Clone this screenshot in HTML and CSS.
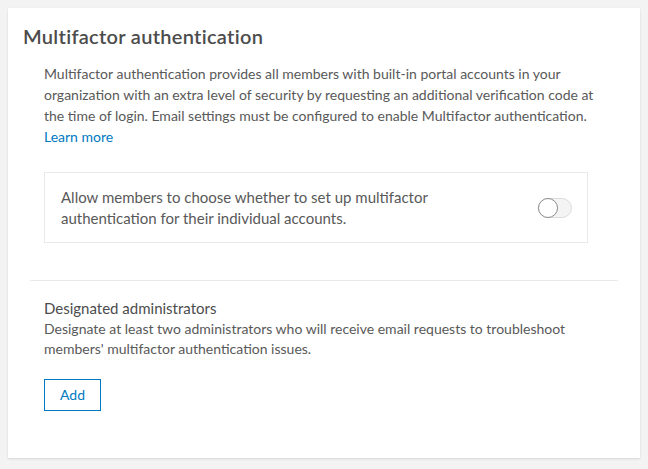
FILE: index.html
```html
<!DOCTYPE html>
<html lang="en">

<head>
    <meta charset="UTF-8">
    <meta name="viewport" content="width=device-width, initial-scale=1.0">
    <title>Multifactor authentication</title>
    <link rel="stylesheet" href="styles.css">
</head>

<body>
    <div class="card">
        <h2 class="card-title">Multifactor authentication</h2>
        <div class="section">
            <p class="intro">Multifactor authentication provides all members with built-in portal accounts in your organization with an extra level of security by requesting an additional verification code at the time of login. Email settings must be configured to enable Multifactor authentication.
                <br><a href="javascript:;" class="learn-more">Learn more</a></p>
            <div class="option-box">
                <span class="option-text">Allow members to choose whether to set up multifactor authentication for their individual accounts.</span>
                <span class="toggle"><span class="toggle-knob"></span></span>
            </div>
        </div>
        <!-- 分割线 -->
        <div class="divider"></div>
        <div class="section">
            <h3 class="sub-title">Designated administrators</h3>
            <p class="sub-desc">Designate at least two administrators who will receive email requests to troubleshoot members' multifactor authentication issues.</p>
            <a href="javascript:;" class="btn-add">Add</a>
        </div>
    </div>
</body>

</html>
```

FILE: styles.css
```css
/* 初始化样式 */

h2,
h3,
p,
div,
span,
a {
    padding: 0px;
    margin: 0px;
}

body {
    margin: 0px;
    padding: 8px;
    background: #f3f3f3;
    font-family: Lato, "Open Sans", sans-serif;
    color: #595959;
}

a {
    text-decoration: none;
    color: #0079c1;
}

/* 卡片 */

.card {
    height: 450px;
    box-sizing: border-box;
    padding: 14px 15px;
    background: #fff;
    box-shadow: 0px 1px 2px rgba(0, 0, 0, 0.12);
}

.card-title {
    font-size: 20px;
    font-weight: 600;
    line-height: 28px;
    letter-spacing: 0.3px;
    color: #4c4c4c;
}

.section {
    margin: 0px 7px;
    padding: 0px 14px;
}

.intro {
    width: 560px;
    margin-top: 13px;
    font-size: 14px;
    line-height: 21px;
}

.learn-more {
    font-size: 14px;
}

/* 开关行 */

.option-box {
    display: flex;
    align-items: center;
    justify-content: space-between;
    width: 544px;
    height: 71px;
    box-sizing: border-box;
    margin-top: 25px;
    padding: 0px 15px 0px 16px;
    border: #e9e9e9 1px solid;
}

.option-text {
    width: 400px;
    font-size: 15px;
    line-height: 21px;
}

.toggle {
    position: relative;
    width: 34px;
    height: 20px;
    box-sizing: border-box;
    border: #dcdcdc 1px solid;
    border-radius: 10px;
    background: #f4f4f4;
}

.toggle-knob {
    position: absolute;
    left: -1px;
    top: -1px;
    width: 20px;
    height: 20px;
    box-sizing: border-box;
    border: #8c8c8c 1px solid;
    border-radius: 50%;
    background: #fff;
}

.divider {
    margin: 37px 7px 0px 7px;
    border-top: #e9e9e9 1px solid;
}

.sub-title {
    margin-top: 17px;
    font-size: 15px;
    font-weight: 400;
    line-height: 21px;
    color: #4c4c4c;
}

.sub-desc {
    width: 560px;
    font-size: 14px;
    line-height: 20px;
}

.btn-add {
    display: inline-block;
    width: 57px;
    height: 32px;
    box-sizing: border-box;
    margin-top: 20px;
    border: #0079c1 1px solid;
    text-align: center;
    line-height: 30px;
    font-size: 14px;
}
```
